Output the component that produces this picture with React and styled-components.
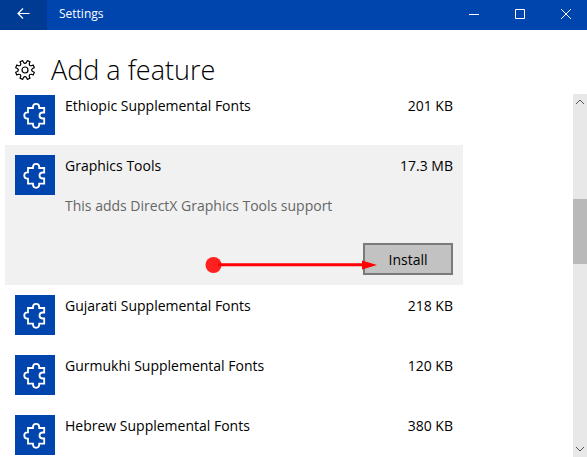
import { useState } from 'react';
import styled, { createGlobalStyle } from 'styled-components';

const GlobalStyle = createGlobalStyle`
	* {
		box-sizing: border-box;
	}
	body {
		margin: 0;
		background: #fff;
		color: #000;
		font-family: 'Segoe UI', 'Open Sans', sans-serif;
		font-size: 14px;
	}
	button {
		padding: 0;
		border: 0;
		font: inherit;
		color: inherit;
	}
`;

const Window = styled.div`
	display: flex;
	flex-direction: column;
	height: 100vh;
	overflow: hidden;
`;

const TitleBar = styled.header`
	display: flex;
	flex: none;
	height: 30px;
	margin-right: -2px;
	background: #0045ad;
	color: #fff;
`;

const BarButton = styled.button`
	display: flex;
	align-items: center;
	justify-content: center;
	width: ${({ $back }) => ($back ? 47 : 46)}px;
	padding-bottom: 2px;
	background: ${({ $back }) => ($back ? '#003b93' : 'transparent')};
`;

const WindowName = styled.span`
	flex: 1;
	padding-left: 12px;
	font-size: 12px;
	line-height: 28px;
`;

const PageHead = styled.div`
	display: flex;
	flex: none;
	align-items: center;
	gap: 16px;
	height: 55px;
	padding: 25px 15px 0;
`;

const Title = styled.h1`
	margin: 0;
	font-size: 27px;
	font-weight: 300;
	line-height: 32px;
`;

const Content = styled.main`
	display: flex;
	flex: 1;
	justify-content: space-between;
	min-height: 0;
	padding-left: 5px;
`;

const FeatureList = styled.ul`
	flex: 0 1 458px;
	margin: 0;
	padding: 0;
	list-style: none;
	overflow: hidden;
`;

const Feature = styled.li`
	position: relative;
	display: flex;
	gap: 10px;
	padding: 10px;
	background: ${({ $selected }) => ($selected ? '#f1f1f1' : 'transparent')};
`;

const Tile = styled.span`
	flex: none;
	width: 40px;
	height: 40px;
	background: #0045ad;
`;

const Details = styled.div`
	display: flex;
	flex: 1;
	flex-direction: column;
`;

const NameRow = styled.div`
	display: flex;
	justify-content: space-between;
	line-height: 22px;
`;

const Description = styled.p`
	margin: 18px 0 26px;
	color: #666;
	line-height: 22px;
`;

const InstallButton = styled.button`
	align-self: flex-end;
	width: 90px;
	height: 32px;
	border: 2px solid #7a7a7a;
	background: #c2c2c2;
`;

const Pointer = styled.svg`
	position: absolute;
	right: 85px;
	bottom: 12px;
	pointer-events: none;
`;

const ScrollBar = styled.div`
	display: flex;
	flex: none;
	flex-direction: column;
	width: 14px;
	margin-top: 9px;
	background: #e8e8e8;
`;

const ScrollButton = styled.button`
	display: flex;
	align-items: center;
	justify-content: center;
	height: 16px;
	background: transparent;
`;

const Track = styled.div`
	display: grid;
	flex: 1;
	grid-template-rows: 89fr 65fr 177fr;
`;

const Thumb = styled.div`
	grid-row: 2;
	background: #b9b9b9;
`;

const features = [
	{ name: 'Ethiopic Supplemental Fonts', size: '201 KB' },
	{ name: 'Graphics Tools', size: '17.3 MB', description: 'This adds DirectX Graphics Tools support' },
	{ name: 'Gujarati Supplemental Fonts', size: '218 KB' },
	{ name: 'Gurmukhi Supplemental Fonts', size: '120 KB' },
	{ name: 'Hebrew Supplemental Fonts', size: '380 KB' }
];

// eight teeth with rounded valleys between them
const polar = (radius, degrees) => {
	const angle = (degrees * Math.PI) / 180;
	return `${(10 + radius * Math.cos(angle)).toFixed(2)} ${(10 + radius * Math.sin(angle)).toFixed(2)}`;
};

const gearPath =
	[0, 1, 2, 3, 4, 5, 6, 7]
		.map((i) => {
			const a = 22.5 + i * 45;
			return `${i ? 'L' : 'M'}${polar(9.6, a - 9)} L${polar(9.6, a + 9)} L${polar(7.8, a + 11)} Q${polar(5.6, a + 22.5)} ${polar(7.8, a + 34)}`;
		})
		.join(' ') + 'Z';

const GearIcon = () => (
	<svg width="20" height="20" viewBox="0 0 20 20" fill="none" stroke="#000" strokeWidth="1.2" strokeLinejoin="round">
		<path d={gearPath} />
		<circle cx="10" cy="10" r="3" />
	</svg>
);

const PuzzleIcon = () => (
	<svg width="40" height="40" viewBox="0 0 40 40" fill="none" stroke="#fff" strokeWidth="1.8">
		<path d="M13 13H18V12C18 7.7 24.2 7.7 24.2 12V13H29.2V17.5H28C23.3 17.5 23.3 23.5 28 23.5H29.2V28.6H24.2V29.6C24.2 33.9 18 33.9 18 29.6V28.6H13V23.7H12.4C8.2 23.7 8.2 17.4 12.4 17.4H13Z" />
	</svg>
);

const Chevron = ({ down }) => (
	<svg width="10" height="6" viewBox="0 0 10 6" fill="none" stroke="#555">
		<path d={down ? 'M1 1L5 5L9 1' : 'M1 5L5 1L9 5'} />
	</svg>
);

export default function App() {
	const [selected, setSelected] = useState('Graphics Tools');

	return (
		<Window>
			<GlobalStyle />
			<TitleBar>
				<BarButton $back aria-label="Back">
					<svg width="14" height="12" viewBox="0 0 14 12" fill="none" stroke="#fff" strokeWidth="1.2">
						<path d="M12.5 5.5H1M6 .5L1 5.5L6 10.5" />
					</svg>
				</BarButton>
				<WindowName>Settings</WindowName>
				<BarButton aria-label="Minimize">
					<svg width="10" height="10" stroke="#fff">
						<path d="M0 5.5H10" />
					</svg>
				</BarButton>
				<BarButton aria-label="Maximize">
					<svg width="10" height="10" fill="none" stroke="#fff">
						<path d="M.5 .5H9.5V9.5H.5Z" />
					</svg>
				</BarButton>
				<BarButton aria-label="Close">
					<svg width="10" height="10" stroke="#fff">
						<path d="M0 0L10 10M10 0L0 10" />
					</svg>
				</BarButton>
			</TitleBar>
			<PageHead>
				<GearIcon />
				<Title>Add a feature</Title>
			</PageHead>
			<Content>
				<FeatureList>
					{features.map(({ name, size, description }) => (
						<Feature key={name} $selected={name === selected} onClick={() => setSelected(name)}>
							<Tile>
								<PuzzleIcon />
							</Tile>
							<Details>
								<NameRow>
									<span>{name}</span>
									<span>{size}</span>
								</NameRow>
								{name === selected && (
									<>
										<Description>{description}</Description>
										<InstallButton>Install</InstallButton>
										<Pointer width="173" height="16" viewBox="0 0 173 16">
											<circle cx="8.5" cy="8" r="8" fill="#ff2020" />
											<path d="M13 6.3H157V3.5L172 8L157 12.5V9.3H13Z" fill="#f00" />
										</Pointer>
									</>
								)}
							</Details>
						</Feature>
					))}
				</FeatureList>
				<ScrollBar>
					<ScrollButton aria-label="Scroll up">
						<Chevron />
					</ScrollButton>
					<Track>
						<Thumb />
					</Track>
					<ScrollButton aria-label="Scroll down">
						<Chevron down />
					</ScrollButton>
				</ScrollBar>
			</Content>
		</Window>
	);
}
